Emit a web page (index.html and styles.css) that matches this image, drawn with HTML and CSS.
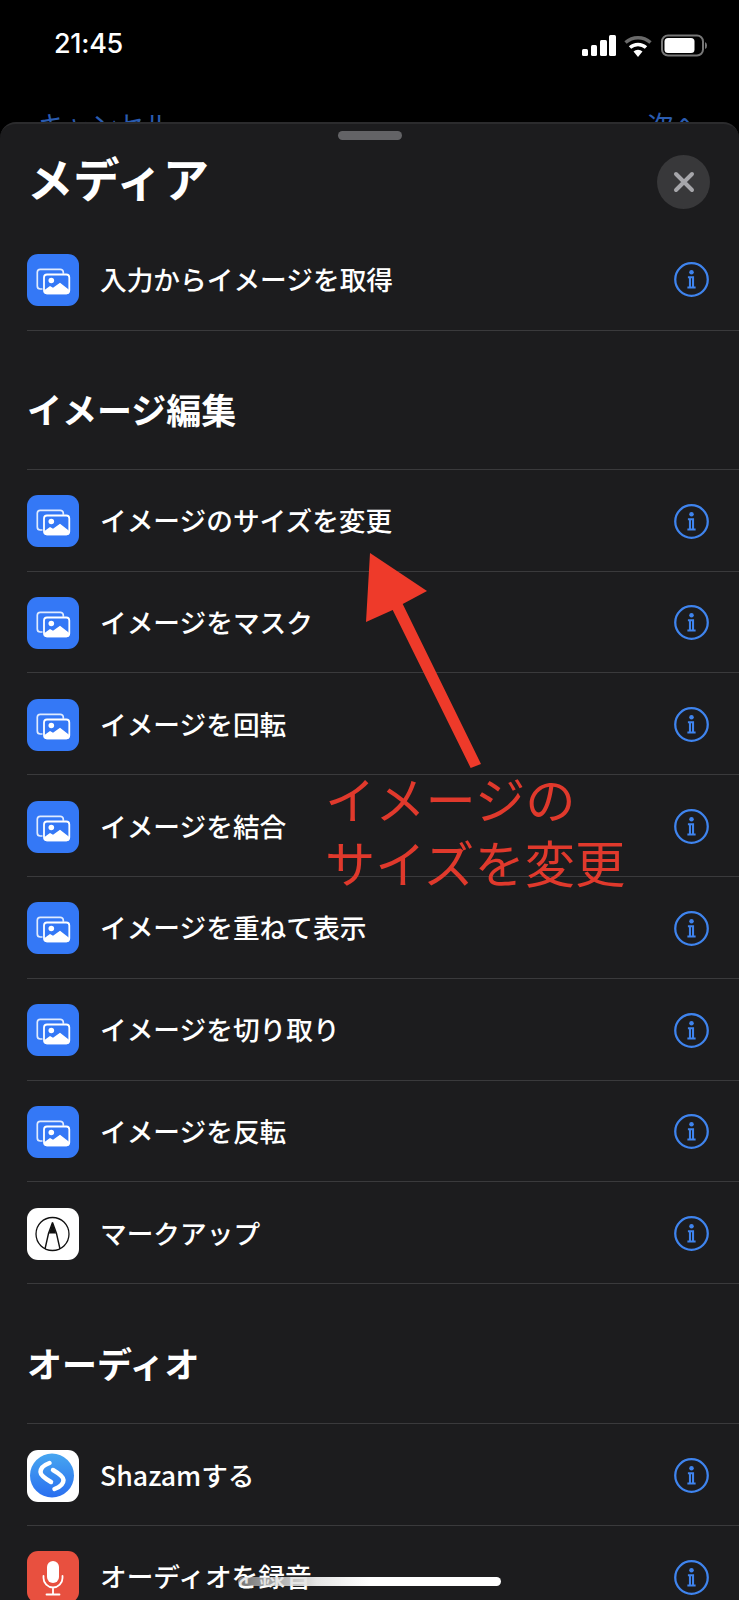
FILE: index.html
```html
<!DOCTYPE html>
<html lang="ja">
<head>
    <meta charset="UTF-8">
    <title>メディア</title>
    <link rel="stylesheet" href="styles.css">
</head>
<body>
<svg class="defs" xmlns="http://www.w3.org/2000/svg">
    <symbol id="photos" viewBox="0 0 52 52">
        <path d="M15.500 35h-2.200a3 3 0 0 1-3-3V18.300a3 3 0 0 1 3-3h20a3 3 0 0 1 3 3v1.500" fill="none" stroke="#fff" stroke-width="1.700" opacity=".85"/>
        <rect x="17" y="20.500" width="25.300" height="18.800" rx="3" fill="none" stroke="#fff" stroke-width="1.800"/>
        <circle cx="24.300" cy="26.500" r="2.800" fill="#fff"/>
        <path d="M17.500 36l5.500-4 3 1.800 7-5 9 7v2a2.500 2.500 0 0 1-2.500 2.500H20a2.500 2.500 0 0 1-2.500-2.500z" fill="#fff"/>
    </symbol>
    <symbol id="info" viewBox="0 0 34 34">
        <circle cx="17" cy="17" r="15.800" fill="none" stroke="#3f84ee" stroke-width="2.200"/>
        <circle cx="17" cy="10" r="2.200" fill="#3f84ee"/>
        <path d="M13.500 14.800h5v10h2.500M13 24.800h8M15.500 15v9.800" fill="none" stroke="#3f84ee" stroke-width="2"/>
    </symbol>
</svg>

<div class="phone">
    <div class="top">
        <div class="status">
            <span class="time">21:45</span>
            <svg class="status-icons" width="127" height="24" viewBox="0 0 127 24">
                <rect x="1" y="15" width="6" height="7" rx="1.500" fill="#fff"/>
                <rect x="10" y="11" width="6" height="11" rx="1.500" fill="#fff"/>
                <rect x="19" y="6" width="7" height="16" rx="1.500" fill="#fff"/>
                <rect x="28" y="1" width="7" height="21" rx="1.500" fill="#fff"/>
                <path d="M44.500 8.500a19 19 0 0 1 25 0" fill="none" stroke="#6a6a6a" stroke-width="3.500"/>
                <path d="M49 13.500a12 12 0 0 1 16 0" fill="none" stroke="#fff" stroke-width="3.500"/>
                <path d="M52.500 17.500a6.500 6.500 0 0 1 9 0L57 23z" fill="#fff"/>
                <rect x="81" y="1.500" width="41" height="20" rx="6" fill="none" stroke="#777" stroke-width="2"/>
                <rect x="83.500" y="4" width="30" height="15" rx="3.500" fill="#fff"/>
                <path d="M124 8v7a3.500 3.500 0 0 0 2-3.500 3.500 3.500 0 0 0-2-3.500z" fill="#777"/>
            </svg>
        </div>
        <div class="nav">
            <span>キャンセル</span>
            <span>次へ</span>
        </div>
    </div>

    <div class="sheet">
        <div class="handle"></div>
        <div class="sheet-head">
            <h1>メディア</h1>
            <div class="close">
                <svg width="24" height="24" viewBox="0 0 24 24"><path d="M4 4l16 16M20 4L4 20" stroke="#a6a6aa" stroke-width="4" stroke-linecap="round"/></svg>
            </div>
        </div>

        <div class="row first">
            <svg class="tile blue"><use href="#photos"/></svg>
            <span class="name">入力からイメージを取得</span>
            <svg class="info"><use href="#info"/></svg>
        </div>

        <h2>イメージ編集</h2>
        <div class="row">
            <svg class="tile blue"><use href="#photos"/></svg>
            <span class="name">イメージのサイズを変更</span>
            <svg class="info"><use href="#info"/></svg>
        </div>
        <div class="row">
            <svg class="tile blue"><use href="#photos"/></svg>
            <span class="name">イメージをマスク</span>
            <svg class="info"><use href="#info"/></svg>
        </div>
        <div class="row">
            <svg class="tile blue"><use href="#photos"/></svg>
            <span class="name">イメージを回転</span>
            <svg class="info"><use href="#info"/></svg>
        </div>
        <div class="row">
            <svg class="tile blue"><use href="#photos"/></svg>
            <span class="name">イメージを結合</span>
            <svg class="info"><use href="#info"/></svg>
        </div>
        <div class="row">
            <svg class="tile blue"><use href="#photos"/></svg>
            <span class="name">イメージを重ねて表示</span>
            <svg class="info"><use href="#info"/></svg>
        </div>
        <div class="row">
            <svg class="tile blue"><use href="#photos"/></svg>
            <span class="name">イメージを切り取り</span>
            <svg class="info"><use href="#info"/></svg>
        </div>
        <div class="row">
            <svg class="tile blue"><use href="#photos"/></svg>
            <span class="name">イメージを反転</span>
            <svg class="info"><use href="#info"/></svg>
        </div>
        <div class="row">
            <svg class="tile white" viewBox="0 0 52 52">
                <circle cx="25.500" cy="26" r="16.500" fill="none" stroke="#111" stroke-width="1.300"/>
                <path d="M25.500 14.500l4 11 3.500 15.500M25.500 14.500l-4 11-3.500 15.500" fill="none" stroke="#111" stroke-width="1.400"/>
                <path d="M25.500 14l3.500 11.500h-7z" fill="#111"/>
            </svg>
            <span class="name">マークアップ</span>
            <svg class="info"><use href="#info"/></svg>
        </div>

        <h2 class="second">オーディオ</h2>
        <div class="row">
            <svg class="tile white" viewBox="0 0 52 52">
                <defs>
                    <linearGradient id="shazam-blue" x1="0" y1="0" x2="0" y2="1">
                        <stop offset="0" stop-color="#47a6f0"/>
                        <stop offset="1" stop-color="#2a6ff0"/>
                    </linearGradient>
                </defs>
                <circle cx="25" cy="25.500" r="22" fill="url(#shazam-blue)"/>
                <path d="M22.500 13C17 15 13.500 18.500 13.500 22C13.500 25 18 28.500 24 32" fill="none" stroke="#fff" stroke-width="4.500" stroke-linecap="round"/>
                <path d="M27.500 39C33 37 36.500 33.500 36.500 30C36.500 27 32 23.500 26 20" fill="none" stroke="#fff" stroke-width="4.500" stroke-linecap="round"/>
            </svg>
            <span class="name">Shazamする</span>
            <svg class="info"><use href="#info"/></svg>
        </div>
        <div class="row">
            <svg class="tile red" viewBox="0 0 52 52">
                <rect x="20" y="10" width="12" height="22" rx="6" fill="#fff"/>
                <path d="M16.500 25v2a9.500 9.500 0 0 0 19 0v-2M26 36.500V43M19.500 43.500h13" fill="none" stroke="#fff" stroke-width="1.800" stroke-linecap="round"/>
            </svg>
            <span class="name">オーディオを録音</span>
            <svg class="info"><use href="#info"/></svg>
        </div>
    </div>

    <svg class="arrow" width="130" height="230" viewBox="0 0 130 230">
        <path d="M10 8L67 46 42.700 59 121 219 110.700 223 32.700 65 6 77z" fill="#ee3a2a"/>
    </svg>
    <div class="note">イメージの<br>サイズを変更</div>
    <div class="home-bar"></div>
</div>
</body>
</html>
```
FILE: styles.css
```css
* {
    margin: 0;
    padding: 0;
    box-sizing: border-box;
}

body {
    background: #000;
    font-family: "Noto Sans CJK JP", "Noto Sans", sans-serif;
    color: #fff;
}

.defs {
    display: none;
}

.phone {
    position: relative;
    width: 739px;
    height: 1600px;
    overflow: hidden;
    background: #000;
}

.top {
    height: 122px;
    overflow: hidden;
}

.status {
    display: flex;
    justify-content: space-between;
    align-items: center;
    height: 58px;
    padding: 33px 31px 0 54px;
}

.time {
    margin-top: -3px;
    font-family: Inter, "Liberation Sans", sans-serif;
    font-size: 27px;
    font-weight: 500;
    letter-spacing: -.3px;
    line-height: 24px;
}

.nav {
    display: flex;
    justify-content: space-between;
    padding: 47px 39px 0 38px;
    font-size: 26.500px;
    line-height: 38px;
    color: #2a5cb0;
}

.sheet {
    height: 1478px;
    background: #1c1c1e;
    border-top: 2px solid #2b2b2d;
    border-radius: 16px 16px 0 0;
}

.handle {
    width: 64px;
    height: 9px;
    margin: 7px auto 15px;
    border-radius: 5px;
    background: #636366;
}

.sheet-head {
    display: flex;
    justify-content: space-between;
    align-items: center;
    height: 54px;
    margin-bottom: 20.500px;
    padding: 0 29px 0 27px;
}

h1 {
    margin-top: -10px;
    font-size: 46.300px;
    font-weight: 700;
    line-height: 54px;
}

.close {
    display: flex;
    align-items: center;
    justify-content: center;
    width: 53px;
    height: 54px;
    border-radius: 50%;
    background: #38383a;
}

.row {
    display: flex;
    align-items: center;
    height: 101.800px;
    margin-left: 27px;
    padding-top: 2px;
    padding-right: 30px;
    border-bottom: 1px solid #3a3a3c;
}

.row.first {
    padding-top: 0;
}

.tile {
    flex: none;
    width: 52px;
    height: 52px;
    border-radius: 11px;
}

.blue {
    background: #3478f6;
}

.white {
    background: #fff;
}

.red {
    background: #e8503f;
}

.name {
    margin: -2px auto 0 21px;
    font-size: 26.700px;
    font-weight: 500;
    line-height: 38px;
}

.info {
    flex: none;
    width: 35px;
    height: 35px;
}

h2 {
    display: flex;
    align-items: flex-end;
    height: 138.500px;
    margin-left: 27px;
    padding-bottom: 37px;
    border-bottom: 1px solid #3a3a3c;
    font-size: 35px;
    font-weight: 700;
    line-height: 46px;
}

h2.second {
    height: 140px;
}

/* annotation drawn over the list */
.arrow {
    position: absolute;
    left: 360px;
    top: 545px;
}

.note {
    position: absolute;
    left: 325px;
    top: 765px;
    font-size: 50.300px;
    font-weight: 400;
    line-height: 64px;
    color: #e0392c;
    white-space: nowrap;
}

.home-bar {
    position: absolute;
    left: 238px;
    top: 1577px;
    width: 263px;
    height: 9px;
    border-radius: 5px;
    background: linear-gradient(90deg, rgba(200, 200, 200, .5), #e6e6e6 30%, #fff 50%);
}
```
